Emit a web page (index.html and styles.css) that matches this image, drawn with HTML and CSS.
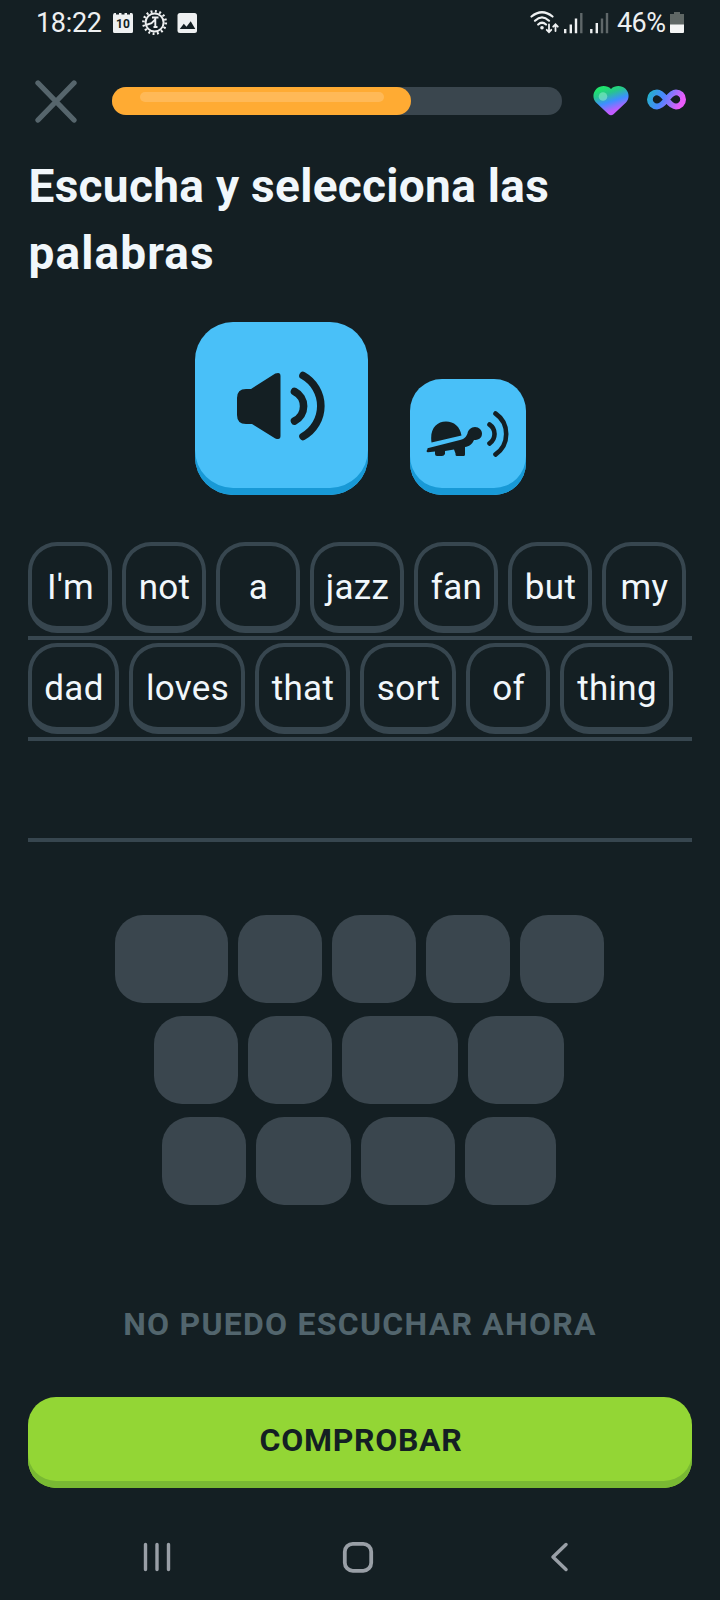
FILE: index.html
```html
<!DOCTYPE html>
<html lang="es">
<head>
<meta charset="utf-8">
<title>Escucha y selecciona las palabras</title>
<link rel="stylesheet" href="styles.css">
</head>
<body>
<div class="screen">
  <header class="status">
    <span class="clock">18:22</span>
    <svg class="status-left" width="86" height="28" viewBox="0 0 86 28">
      <path fill="#eef0f1" d="M1 6.5Q1 4 2.500 4H4v1.500h3V4h2.500v1.500h3V4H15v1.500h3V4h1.500Q21 4 21 6V22.500Q21 24 19.500 24H2.500Q1 24 1 22.500Z"/>
      <text x="11" y="18.800" text-anchor="middle" class="cal-day">10</text>
      <circle cx="42.600" cy="13.500" r="9" fill="none" stroke="#eef0f1" stroke-width="2"/>
      <circle cx="42.600" cy="13.500" r="11.200" fill="none" stroke="#eef0f1" stroke-width="2.600" stroke-dasharray="1.900 2.498"/>
      <path fill="none" stroke="#eef0f1" stroke-width="1.900" d="M40 8.500h6.500M43.300 8.500v9.500M41.500 18h4M34 16l5.500-1.800 3.500-3.500"/>
      <rect x="65.500" y="4" width="19.500" height="20" rx="2.500" fill="#eef0f1"/>
      <path fill="#141f23" d="M67.800 20l4-5.200 2.700 2.900 4.200-5.500 4.600 7.800z"/>
    </svg>
    <svg class="status-right" width="80" height="28" viewBox="0 0 80 28">
      <g fill="none" stroke="#eef0f1" stroke-width="2.200" stroke-linecap="round">
        <path d="M1.500 7.500Q12-1 22.500 7.500M5 11.700Q12 5 19 11.700M8.200 15.500Q12 12 16 15.500"/>
        <path stroke-width="1.800" d="M19 15.500v7.500M16.700 20.800l2.300 2.400 2.300-2.400M25.500 22v-6.500M23.200 17.700l2.300-2.400 2.300 2.400"/>
      </g>
      <circle cx="12" cy="18.800" r="1.800" fill="#eef0f1"/>
      <path stroke="#eef0f1" stroke-width="2.400" d="M35.200 20v4.200M40.800 15.500v8.700M46 9.500v14.700M61.300 20v4.200M66.800 14v10.200"/>
      <path stroke="#5f6769" stroke-width="2.400" d="M51.300 4v20.200M72 9.500v14.700M77 4v20.200"/>
    </svg>
    <span class="percent">46%</span>
    <svg class="battery" width="14" height="22" viewBox="0 0 14 22">
      <path fill="#5f6765" d="M4 0h6v2h4v12H0V2h4z"/><path fill="#f4f5f5" d="M0 12.500h14V20q0 1-1 1H1q-1 0-1-1z"/>
    </svg>
  </header>

  <div class="topbar">
    <svg class="close" width="44" height="44" viewBox="0 0 44 44"><path d="M4 4l36 37M40 4L4 41" stroke="#56656c" stroke-width="5.300" stroke-linecap="round"/></svg>
    <div class="progress"><div class="fill" style="width:299px"><div class="shine"></div></div></div>
    <svg class="heart" width="36" height="30" viewBox="0 0 36 30">
      <defs><linearGradient id="hg" x1=".22" y1="0" x2=".62" y2="1"><stop offset=".08" stop-color="#20e36d"/><stop offset=".28" stop-color="#27c58e"/><stop offset=".55" stop-color="#3d8fff"/><stop offset=".85" stop-color="#c15cff"/></linearGradient></defs>
      <path fill="url(#hg)" d="M18 3C22-.8 28.500-.8 32.500 2.800c4 4 4 9.700.5 13.700L20.500 28.200q-2.500 2-5 0L3 16.500C-.500 12.500-.500 6.800 3.500 2.800 7.500-.8 14-.8 18 3z"/>
      <circle cx="10" cy="10.500" r="4.300" fill="#8ff0cc" opacity=".55"/>
    </svg>
    <svg class="infinity" width="39" height="21" viewBox="0 0 39 21">
      <defs><linearGradient id="ig" gradientUnits="userSpaceOnUse" x1="2" y1="2" x2="36" y2="18"><stop offset="0" stop-color="#22b3c9"/><stop offset=".4" stop-color="#4a86ff"/><stop offset=".9" stop-color="#ea5cfb"/></linearGradient></defs>
      <path fill="none" stroke="url(#ig)" stroke-width="5.800" d="M19.500 10.500C16 6 13.500 3.300 10 3.300a7.100 7.100 0 0 0 0 14.200c3.500 0 6-2.500 9.500-7S25.500 3.300 29 3.300a7.100 7.100 0 0 1 0 14.200c-3.500 0-6-2.500-9.500-7z"/>
    </svg>
  </div>

  <h1 class="title">Escucha y selecciona las<br><span class="wide">palabras</span></h1>

  <div class="audio">
    <button class="play big">
      <svg width="90" height="72" viewBox="0 0 90 72">
        <path fill="#141f23" d="M10 19h5L39.300 3.600Q44.500 1.500 44.500 6v60q0 4.500-5.200 2.400L16 54H10Q1 54 1 45V28q0-9 9-9z"/>
        <path fill="none" stroke="#141f23" stroke-width="7.600" stroke-linecap="round" d="M58.500 21.500a16.500 16.500 0 0 1 0 29.500M67 5.500a35 35 0 0 1 0 61"/>
      </svg>
    </button>
    <button class="play small">
      <svg width="84" height="46" viewBox="0 0 84 46">
        <path fill="#141f23" d="M5.500 31.500C3.500 18 10.500 10.500 20 10.500c8 0 14 5 15.500 14zM1.500 37.300L34 29c5-1.200 6-3 7.500-6.500C42 19 45 16 49 16c4 0 7 3 7 6.500 0 5-4 6.500-8 6.500-2 4.500-5 6.300-9 7v7.500q0 1.500-1.500 1.500h-6.500q-1.500 0-1.500-1.500v-1l-1.500-4-9 1.500v3q-1 2-3 2H11q-2 0-2-2v-2.500l-7 .800q-2.500-.5-.5-3z"/>
        <path fill="none" stroke="#141f23" stroke-width="4.600" stroke-linecap="round" d="M63.500 13.500a11.500 11.500 0 0 1 0 19M69.500 2.500a25 25 0 0 1 0 41"/>
      </svg>
    </button>
  </div>

  <div class="answer">
    <div class="line"><span class="word w84">I'm</span><span class="word w84">not</span><span class="word w84">a</span><span class="word w94">jazz</span><span class="word w84">fan</span><span class="word w84">but</span><span class="word w84">my</span></div>
    <div class="line"><span class="word w91">dad</span><span class="word w116">loves</span><span class="word w95">that</span><span class="word w96">sort</span><span class="word w84">of</span><span class="word w113">thing</span></div>
    <div class="line"></div>
  </div>

  <div class="bank">
    <div class="slots"><i class="slot w113"></i><i class="slot w84"></i><i class="slot w84"></i><i class="slot w84"></i><i class="slot w84"></i></div>
    <div class="slots"><i class="slot w84"></i><i class="slot w84"></i><i class="slot w116"></i><i class="slot w96"></i></div>
    <div class="slots"><i class="slot w84"></i><i class="slot w95"></i><i class="slot w94"></i><i class="slot w91"></i></div>
  </div>

  <div class="skip">NO PUEDO ESCUCHAR AHORA</div>
  <button class="check">COMPROBAR</button>

  <nav class="nav">
    <svg width="30" height="32" viewBox="0 0 30 32"><path d="M3.500 3.500v25M15 3.500v25M26.500 3.500v25" stroke="#999fa6" stroke-width="3.400" stroke-linecap="round"/></svg>
    <svg width="32" height="32" viewBox="0 0 32 32"><rect x="2.800" y="2.800" width="26.400" height="27" rx="8" fill="none" stroke="#999fa6" stroke-width="3.800"/></svg>
    <svg width="22" height="32" viewBox="0 0 22 32"><path d="M18 3.500L5 16l13 12.500" fill="none" stroke="#999fa6" stroke-width="3.500" stroke-linecap="round" stroke-linejoin="round"/></svg>
  </nav>
</div>
</body>
</html>
```
FILE: styles.css
```css
* { box-sizing: border-box; }
body { margin: 0; background: #141f23; }
svg { display: block; flex: none; }
button { border: 0; padding: 0; font-family: inherit; }
.screen {
  width: 720px; height: 1600px; overflow: hidden;
  display: flex; flex-direction: column;
  background: #141f23; color: #f1f7fb;
  font-family: Roboto, "Liberation Sans", sans-serif;
}

.status { height: 46px; padding: 9px 36px 0 36px; display: flex; align-items: flex-start; }
.clock, .percent { font-size: 27px; line-height: 28px; color: #eef0f1; }
.clock { width: 76px; letter-spacing: -.3px; }
.cal-day { font-size: 12px; font-weight: 700; fill: #141f23; }
.status-right { margin-left: auto; }
.percent { width: 51px; margin-left: 7px; letter-spacing: -.6px; }
.battery { margin: 3px 0 0 2px; }

.topbar { height: 107px; padding: 0 34px; display: flex; align-items: flex-start; }
.close { margin: 33px 34px 0 0; }
.progress { width: 450px; height: 28px; margin-top: 41px; border-radius: 14px; background: #3a464e; }
.fill { height: 28px; border-radius: 14px; background: #ffab33; padding: 5px 27px 0 28px; }
.shine { height: 10px; border-radius: 5px; background: #ffb957; }
.heart { margin: 40px 0 0 30.5px; }
.infinity { margin: 43px 0 0 18px; }

.title { margin: 0; padding-left: 28.5px; height: 169px; font-size: 46px; line-height: 67px; font-weight: 700; letter-spacing: .3px; }
.wide { letter-spacing: 1.1px; }

.audio { display: flex; align-items: flex-end; justify-content: center; gap: 42px; height: 173px; }
.play { display: flex; align-items: center; justify-content: center; padding-bottom: 5px; background: #49c0f8; box-shadow: inset 0 -7px #1899d6; }
.big { width: 173px; height: 173px; border-radius: 38px; }
.small { width: 116px; height: 116px; border-radius: 32px; padding: 0 0 7px 1px; }

.answer { margin: 44px 28px 0; }
.line { height: 101px; padding-top: 3px; border-bottom: 4px solid #37464f; display: flex; gap: 10px; }
.word {
  height: 91px; padding: 3px 0 0 1px; border: 4px solid #37464f; border-bottom-width: 7px; border-radius: 29px;
  display: flex; align-items: center; justify-content: center; flex: none;
  font-size: 35px; letter-spacing: .3px;
}
.w84 { width: 84px; } .w91 { width: 91px; } .w94 { width: 94px; } .w95 { width: 95px; }
.w96 { width: 96px; } .w113 { width: 113px; } .w116 { width: 116px; }

.bank { margin-top: 73px; padding-right: 2px; display: flex; flex-direction: column; gap: 13px; }
.slots { display: flex; justify-content: center; gap: 10px; }
.slot { height: 88px; border-radius: 28px; background: #3a464e; }

.skip { margin-top: 99px; height: 40px; text-align: center; font-size: 32px; line-height: 40px; font-weight: 700; letter-spacing: 1.25px; color: #52656d; }
.check {
  margin: 53px 28px 0; height: 91px; padding: 0 0 6px 2px; border-radius: 28px; flex: none;
  background: #93d635; box-shadow: inset 0 -7px #79b933; color: #141f23;
  font-size: 32px; font-weight: 700; letter-spacing: .7px;
}
.nav { margin-top: 53px; padding: 0 150px 0 142px; display: flex; }
.nav svg:nth-child(2) { margin-left: 170px; }
.nav svg:nth-child(3) { margin-left: auto; }
```
